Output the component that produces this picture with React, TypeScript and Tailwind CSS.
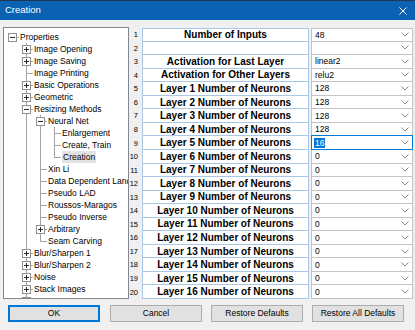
import React from "react";

type Exp = "plus" | "minus" | null;
interface TNode {
  label: string;
  level: number;
  exp: Exp;
  guides: boolean[];
  last: boolean;
  root?: boolean;
  selected?: boolean;
}

const L1 = [false];
const L2 = [false, true];
const L3 = [false, true, true];

const nodes: TNode[] = [
  { label: "Properties", level: 0, exp: "minus", guides: [], last: true, root: true },
  { label: "Image Opening", level: 1, exp: "plus", guides: L1, last: false },
  { label: "Image Saving", level: 1, exp: "plus", guides: L1, last: false },
  { label: "Image Printing", level: 1, exp: null, guides: L1, last: false },
  { label: "Basic Operations", level: 1, exp: "plus", guides: L1, last: false },
  { label: "Geometric", level: 1, exp: "plus", guides: L1, last: false },
  { label: "Resizing Methods", level: 1, exp: "minus", guides: L1, last: false },
  { label: "Neural Net", level: 2, exp: "minus", guides: L2, last: false },
  { label: "Enlargement", level: 3, exp: null, guides: L3, last: false },
  { label: "Create, Train", level: 3, exp: null, guides: L3, last: false },
  { label: "Creation", level: 3, exp: null, guides: L3, last: true, selected: true },
  { label: "Xin Li", level: 2, exp: null, guides: L2, last: false },
  { label: "Data Dependent Lanczos", level: 2, exp: null, guides: L2, last: false },
  { label: "Pseudo LAD", level: 2, exp: null, guides: L2, last: false },
  { label: "Roussos-Maragos", level: 2, exp: null, guides: L2, last: false },
  { label: "Pseudo Inverse", level: 2, exp: null, guides: L2, last: false },
  { label: "Arbitrary", level: 2, exp: "plus", guides: L2, last: false },
  { label: "Seam Carving", level: 2, exp: null, guides: L2, last: true },
  { label: "Blur/Sharpen 1", level: 1, exp: "plus", guides: L1, last: false },
  { label: "Blur/Sharpen 2", level: 1, exp: "plus", guides: L1, last: false },
  { label: "Noise", level: 1, exp: "plus", guides: L1, last: false },
  { label: "Stack Images", level: 1, exp: "plus", guides: L1, last: false },
  { label: "", level: 1, exp: "plus", guides: L1, last: false },
];

const rows: { label: string; value: string; focused?: boolean }[] = [
  { label: "Number of Inputs", value: "48" },
  { label: "", value: "" },
  { label: "Activation for Last Layer", value: "linear2" },
  { label: "Activation for Other Layers", value: "relu2" },
  { label: "Layer 1 Number of Neurons", value: "128" },
  { label: "Layer 2 Number of Neurons", value: "128" },
  { label: "Layer 3 Number of Neurons", value: "128" },
  { label: "Layer 4 Number of Neurons", value: "128" },
  { label: "Layer 5 Number of Neurons", value: "16", focused: true },
  { label: "Layer 6 Number of Neurons", value: "0" },
  { label: "Layer 7 Number of Neurons", value: "0" },
  { label: "Layer 8 Number of Neurons", value: "0" },
  { label: "Layer 9 Number of Neurons", value: "0" },
  { label: "Layer 10 Number of Neurons", value: "0" },
  { label: "Layer 11 Number of Neurons", value: "0" },
  { label: "Layer 12 Number of Neurons", value: "0" },
  { label: "Layer 13 Number of Neurons", value: "0" },
  { label: "Layer 14 Number of Neurons", value: "0" },
  { label: "Layer 15 Number of Neurons", value: "0" },
  { label: "Layer 16 Number of Neurons", value: "0" },
];

function Expander({ type }: { type: "plus" | "minus" }) {
  return (
    <span className="absolute left-[3px] top-[2px] w-[9px] h-[9px] border border-[#919191] bg-white flex items-center justify-center">
      <svg width="7" height="7" viewBox="0 0 7 7">
        <path d="M1 3.5H6" stroke="#2b2b2b" strokeWidth="1" />
        {type === "plus" && <path d="M3.5 1V6" stroke="#2b2b2b" strokeWidth="1" />}
      </svg>
    </span>
  );
}

function TreeRow({ n }: { n: TNode }) {
  return (
    <div className="flex h-[12px] shrink-0 items-stretch overflow-hidden">
      {n.guides.map((g, i) => (
        <span key={i} className="relative w-[14px] shrink-0">
          {g && <span className="absolute left-[7px] top-0 bottom-0 w-px bg-[#a3a3a3]" />}
        </span>
      ))}
      <span className="relative w-[14px] shrink-0">
        {!n.root && <span className="absolute left-[7px] top-0 h-[7px] w-px bg-[#a3a3a3]" />}
        {!n.last && <span className="absolute left-[7px] top-[6px] bottom-0 w-px bg-[#a3a3a3]" />}
        <span className="absolute left-[7px] right-0 top-[6px] h-px bg-[#a3a3a3]" />
        {n.exp && <Expander type={n.exp} />}
      </span>
      <span
        className={
          "ml-px min-w-0 overflow-hidden whitespace-nowrap leading-[12px] text-[8.5px] text-black " +
          (n.selected ? "bg-[#e3e3e3] px-[1px] -ml-px" : "")
        }
      >
        {n.label}
      </span>
    </div>
  );
}

function Chevron() {
  return (
    <svg width="8" height="5" viewBox="0 0 8 5" className="shrink-0">
      <polyline points="0.5,0.5 4,4 7.5,0.5" fill="none" stroke="#8c8c8c" strokeWidth="1" />
    </svg>
  );
}

export default function App() {
  return (
    <div
      className="w-[415px] h-[330px] bg-[#f0f0f0] overflow-hidden flex flex-col"
      style={{ fontFamily: '"Liberation Sans", Arial, sans-serif' }}
    >
      {/* Title bar */}
      <div className="h-[20px] shrink-0 bg-[#0b62b3] border-t border-[#23384f] flex items-center justify-between pl-[5px] pr-[8px]">
        <span className="text-white text-[9.5px]">Creation</span>
        <svg width="8" height="8" viewBox="0 0 8 8">
          <path d="M0.5 0.5L7.5 7.5M7.5 0.5L0.5 7.5" stroke="#ffffff" strokeWidth="1" />
        </svg>
      </div>

      {/* Main area */}
      <div className="flex pt-[7px] pl-[3px]">
        {/* Tree */}
        <div className="w-[126px] h-[272px] shrink-0 border border-[#828790] bg-white overflow-hidden pt-[3px] pl-px flex flex-col">
          {nodes.map((n, i) => (
            <TreeRow key={i} n={n} />
          ))}
        </div>

        {/* Grid */}
        <div className="mt-px h-[271px] grid grid-rows-[repeat(20,minmax(0,1fr))]">
          {rows.map((r, i) => (
            <div key={i} className="flex min-h-0">
              <div className="w-[13px] shrink-0 flex items-center justify-end pr-[4px] text-[7.5px] text-black">
                {i + 1}
              </div>
              <div
                className={
                  "w-[167px] shrink-0 bg-white border-x border-b border-[#a9c8e8] flex items-center justify-center text-[10px] font-bold text-black whitespace-nowrap overflow-hidden " +
                  (i === 0 ? "border-t" : "")
                }
              >
                {r.label}
              </div>
              <div
                className={
                  "relative ml-[2px] w-[102px] shrink-0 bg-white border-x border-b border-[#c4c4c4] flex items-center justify-between pl-[3px] pr-[3px] text-[8.5px] text-black " +
                  (i === 0 ? "border-t" : "")
                }
              >
                {r.focused && (
                  <span className="absolute -top-px -left-px -right-px -bottom-px border border-[#0078d7]" />
                )}
                <span
                  className={
                    "leading-[10px] " + (r.focused ? "bg-[#0078d7] text-white px-[1px] -ml-px" : "")
                  }
                >
                  {r.value}
                </span>
                <Chevron />
              </div>
            </div>
          ))}
        </div>
      </div>

      {/* Buttons */}
      <div className="flex pl-[8px] mt-[6px] gap-[9px]">
        <button className="w-[92px] h-[17px] bg-[#e1e1e1] border border-[#0078d7] shadow-[inset_0_0_0_1px_#0078d7] text-[8.5px] text-black">
          OK
        </button>
        <button className="ml-px w-[92px] h-[17px] bg-[#e1e1e1] border border-[#adadad] text-[8.5px] text-black">
          Cancel
        </button>
        <button className="w-[92px] h-[17px] bg-[#e1e1e1] border border-[#adadad] text-[8.5px] text-black">
          Restore Defaults
        </button>
        <button className="w-[92px] h-[17px] bg-[#e1e1e1] border border-[#adadad] text-[8.5px] text-black">
          Restore All Defaults
        </button>
      </div>
    </div>
  );
}
